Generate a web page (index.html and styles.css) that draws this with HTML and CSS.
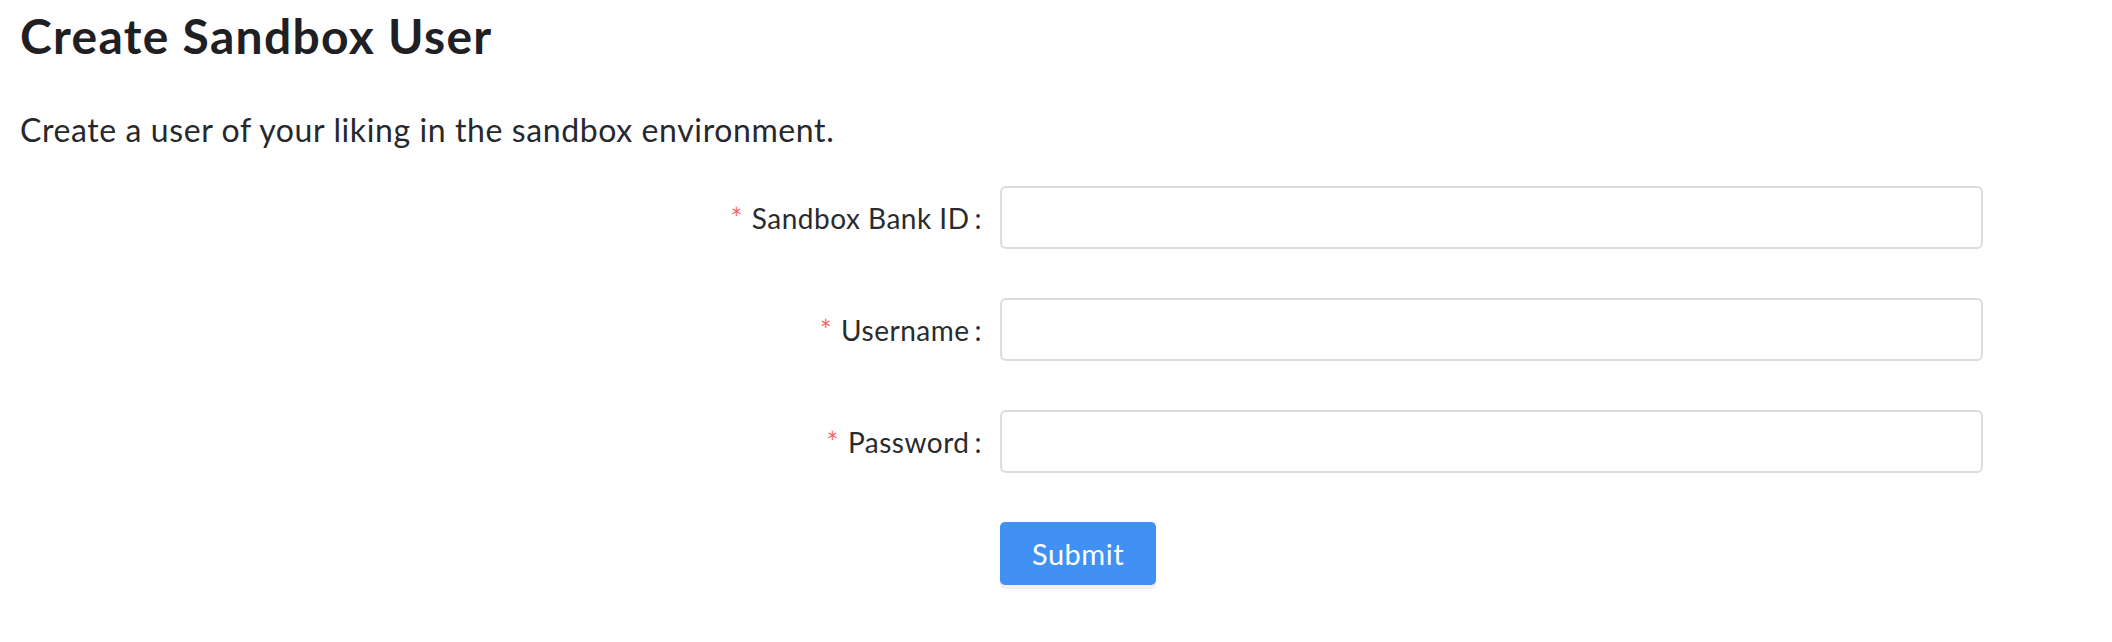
FILE: index.html
```html
<!DOCTYPE html>
<html lang="en">
<head>
    <meta charset="UTF-8">
    <meta name="viewport" content="width=device-width, initial-scale=1.0">
    <title>Create Sandbox User</title>
    <link rel="stylesheet" href="styles.css">
</head>
<body>
    <div class="page">
        <h1 class="title">Create Sandbox User</h1>
        <p class="intro">Create a user of your liking in the sandbox environment.</p>

        <form class="form" onsubmit="return false">
            <div class="form-row">
                <label class="form-label" for="bank-id"><span class="req">*</span>Sandbox Bank ID<span class="colon">:</span></label>
                <input class="form-input" type="text" id="bank-id">
            </div>
            <div class="form-row">
                <label class="form-label" for="username"><span class="req">*</span>Username<span class="colon">:</span></label>
                <input class="form-input" type="text" id="username">
            </div>
            <div class="form-row">
                <label class="form-label" for="password"><span class="req">*</span>Password<span class="colon">:</span></label>
                <input class="form-input" type="password" id="password">
            </div>
            <div class="form-row">
                <div class="form-label"></div>
                <button class="btn-submit" type="submit">Submit</button>
            </div>
        </form>
    </div>
</body>
</html>
```

FILE: styles.css
```css
body {
    margin: 0;
    background: #fff;
    font-family: Lato, "Noto Sans", sans-serif;
    color: #27282c;
}

.page {
    padding: 7px 20px 0 20px;
}

.title {
    margin: 0;
    font-size: 48px;
    line-height: 58px;
    font-weight: 700;
    letter-spacing: 1.3px;
    color: #1f2024;
}

.intro {
    margin: 46px 0 0 0;
    font-size: 32px;
    line-height: 38px;
    letter-spacing: 0.6px;
}

.form {
    margin-top: 37px;
}

.form-row {
    display: flex;
    align-items: center;
    margin-bottom: 49px;
}

.form-label {
    width: 980px;
    box-sizing: border-box;
    padding-right: 18px;
    text-align: right;
    font-size: 28px;
    letter-spacing: 0.5px;
    color: #2a2b2f;
}

.req {
    color: #f56c6c;
    margin-right: 9px;
}

.colon {
    margin-left: 5px;
}

.form-input {
    width: 983px;
    height: 63px;
    box-sizing: border-box;
    border: 2px solid #dcdcdc;
    border-radius: 6px;
    padding: 0 20px;
    font-size: 28px;
    outline: none;
}

.btn-submit {
    width: 156px;
    height: 63px;
    border: none;
    border-radius: 5px;
    background: #4191f5;
    color: #fff;
    font-family: Lato, "Noto Sans", sans-serif;
    font-size: 29px;
    letter-spacing: 0.5px;
    box-shadow: 0 4px 0 #f0f0f0;
}
```
